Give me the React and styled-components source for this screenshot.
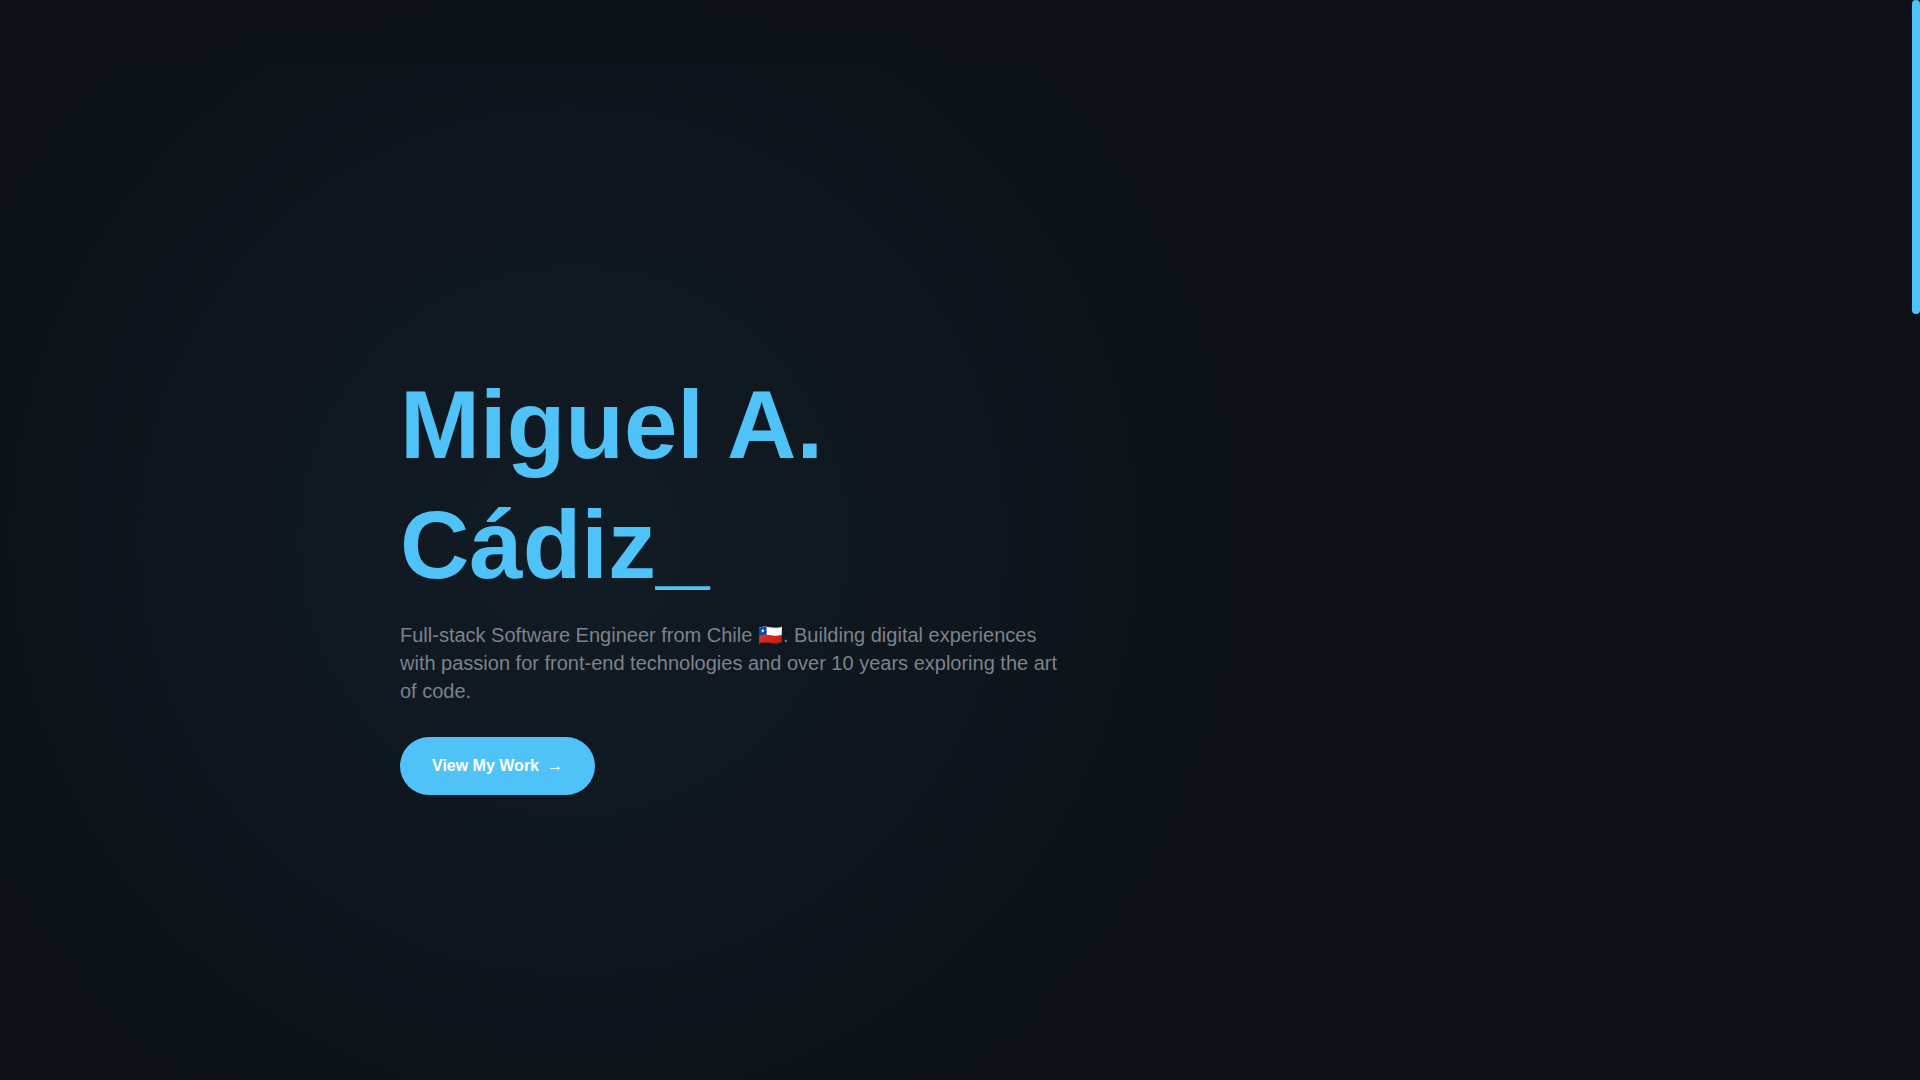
import React from "react";
import styled, { createGlobalStyle } from "styled-components";

const GlobalStyle = createGlobalStyle`
  *, *::before, *::after { box-sizing: border-box; }
  body {
    margin: 0;
    background: #0d1117;
    font-family: "Liberation Sans", Arial, sans-serif;
  }
`;

const Page = styled.div`
  display: flex;
  min-height: 100vh;
`;

const Hero = styled.main`
  flex: 1;
  display: flex;
  justify-content: center;
  align-items: center;
  padding: 80px 24px 0;
  background:
    linear-gradient(rgba(13, 17, 23, 0.6), rgba(13, 17, 23, 0.4)) top / 100% 64px no-repeat,
    radial-gradient(circle at 30% 50%, rgba(79, 195, 247, 0.06) 0%, transparent 50%);
`;

const Container = styled.div`
  width: 100%;
  max-width: 1112px;
`;

const Intro = styled.section`
  display: flex;
  flex-direction: column;
  align-items: flex-start;
  max-width: 672px;
`;

const Name = styled.h1`
  margin: 0 0 16px;
  color: #4fc3f7;
  font-size: 96px;
  font-weight: 700;
  line-height: 120px;
`;

const Tagline = styled.p`
  margin: 0 0 32px;
  color: #7d828c;
  font-size: 20px;
  line-height: 28px;
`;

const WorkLink = styled.a`
  display: inline-flex;
  align-items: center;
  gap: 8px;
  padding: 16px 32px;
  border-radius: 50px;
  background: #4fc3f7;
  color: #fff;
  font-size: 16px;
  font-weight: 600;
  line-height: 26px;
  text-decoration: none;
`;

const ScrollRail = styled.div`
  width: 8px;
  height: 100vh;
  background: #0d1117;
`;

const ScrollThumb = styled.div`
  height: 29.1%;
  border-radius: 4px;
  background: #4fc3f7;
`;

export default function App() {
  return (
    <>
      <GlobalStyle />
      <Page>
        <Hero>
          <Container>
            <Intro>
              <Name>Miguel A. Cádiz_</Name>
              <Tagline>
                Full-stack Software Engineer from Chile 🇨🇱. Building digital experiences with
                passion for front-end technologies and over 10 years exploring the art of code.
              </Tagline>
              <WorkLink href="#work">
                View My Work <span aria-hidden="true">→</span>
              </WorkLink>
            </Intro>
          </Container>
        </Hero>
        <ScrollRail aria-hidden="true">
          <ScrollThumb />
        </ScrollRail>
      </Page>
    </>
  );
}
